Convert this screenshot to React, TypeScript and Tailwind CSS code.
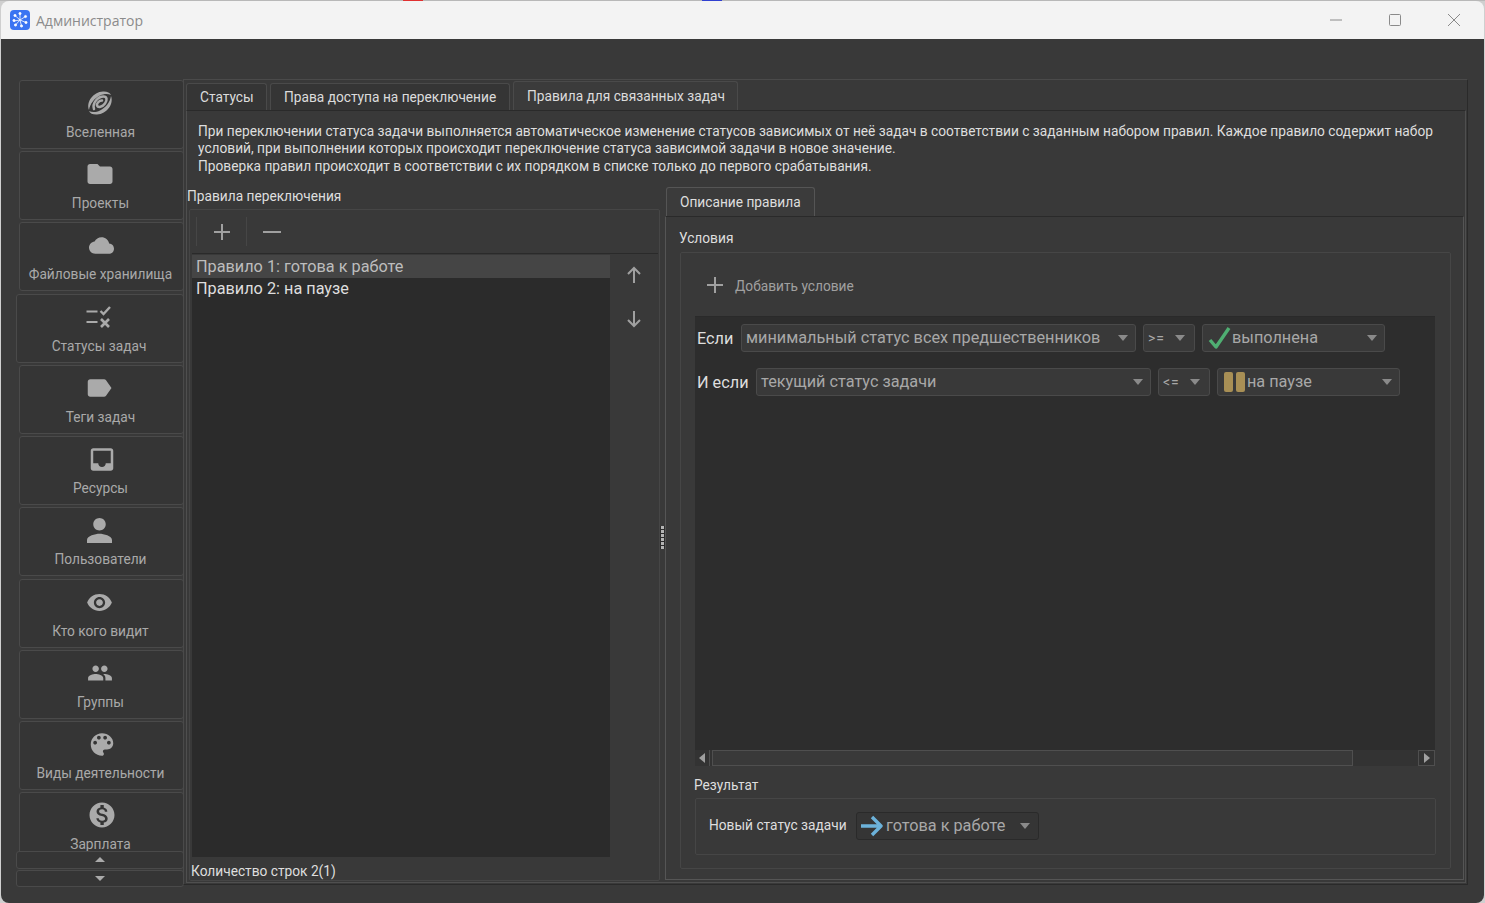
import React from "react";

const P: Record<string, string> = {
  folder: "M10 4H4c-1.1 0-1.99.9-1.99 2L2 18c0 1.1.9 2 2 2h16c1.1 0 2-.9 2-2V8c0-1.1-.9-2-2-2h-8l-2-2z",
  cloud: "M19.35 10.04C18.67 6.59 15.64 4 12 4 9.11 4 6.6 5.64 5.35 8.04 2.34 8.36 0 10.91 0 14c0 3.31 2.69 6 6 6h13c2.76 0 5-2.24 5-5 0-2.64-2.05-4.78-4.65-4.96z",
  label: "M17.63 5.84C17.27 5.33 16.67 5 16 5L5 5.01C3.9 5.01 3 5.9 3 7v10c0 1.1.9 1.99 2 1.99L16 19c.67 0 1.27-.33 1.63-.84L22 12l-4.37-6.16z",
  inbox: "M19 3H4.99c-1.11 0-1.98.89-1.98 2L3 19c0 1.1.88 2 1.99 2H19c1.1 0 2-.9 2-2V5c0-1.11-.9-2-2-2zm0 12h-4c0 1.66-1.35 3-3 3s-3-1.34-3-3H4.99V5H19v10z",
  person: "M12 12c2.21 0 4-1.79 4-4s-1.79-4-4-4-4 1.79-4 4 1.79 4 4 4zm0 2c-2.67 0-8 1.34-8 4v2h16v-2c0-2.66-5.33-4-8-4z",
  eye: "M12 4.5C7 4.5 2.73 7.61 1 12c1.73 4.39 6 7.5 11 7.5s9.27-3.11 11-7.5c-1.73-4.39-6-7.5-11-7.5zM12 17c-2.76 0-5-2.24-5-5s2.24-5 5-5 5 2.24 5 5-2.24 5-5 5zm0-8c-1.66 0-3 1.34-3 3s1.34 3 3 3 3-1.34 3-3-1.34-3-3-3z",
  group: "M16 11c1.66 0 2.99-1.34 2.99-3S17.66 5 16 5c-1.66 0-3 1.34-3 3s1.34 3 3 3zm-8 0c1.66 0 2.99-1.34 2.99-3S9.66 5 8 5C6.34 5 5 6.34 5 8s1.34 3 3 3zm0 2c-2.33 0-7 1.17-7 3.5V19h14v-2.5c0-2.33-4.67-3.5-7-3.5zm8 0c-.29 0-.62.02-.97.05 1.16.84 1.97 1.97 1.97 3.45V19h6v-2.5c0-2.33-4.67-3.5-7-3.5z",
  palette: "M12 3c-4.97 0-9 4.03-9 9s4.03 9 9 9c.83 0 1.5-.67 1.5-1.5 0-.39-.15-.74-.39-1.01-.23-.26-.38-.61-.38-.99 0-.83.67-1.5 1.5-1.5H16c2.76 0 5-2.24 5-5 0-4.42-4.03-8-9-8zm-5.5 9c-.83 0-1.5-.67-1.5-1.5S5.67 9 6.5 9 8 9.67 8 10.5 7.33 12 6.5 12zm3-4C8.67 8 8 7.33 8 6.5S8.67 5 9.5 5s1.5.67 1.5 1.5S10.33 8 9.5 8zm5 0c-.83 0-1.5-.67-1.5-1.5S13.67 5 14.5 5s1.5.67 1.5 1.5S15.33 8 14.5 8zm3 4c-.83 0-1.5-.67-1.5-1.5S16.67 9 17.5 9s1.5.67 1.5 1.5-.67 1.5-1.5 1.5z",
  money: "M12 2C6.48 2 2 6.48 2 12s4.48 10 10 10 10-4.48 10-10S17.52 2 12 2zm1.41 16.09V20h-2.67v-1.93c-1.71-.36-3.16-1.46-3.27-3.4h1.96c.1 1.05.82 1.87 2.65 1.87 1.96 0 2.4-.98 2.4-1.59 0-.83-.44-1.61-2.67-2.14-2.48-.6-4.18-1.62-4.18-3.67 0-1.72 1.39-2.84 3.11-3.21V4h2.67v1.95c1.86.45 2.79 1.86 2.85 3.39H14.3c-.05-1.11-.64-1.87-2.22-1.87-1.5 0-2.4.68-2.4 1.64 0 .84.65 1.39 2.67 1.91s4.18 1.39 4.18 3.91c-.01 1.83-1.38 2.83-3.12 3.16z",
};

function NavIcon({ name, size }: { name: string; size: number }) {
  if (name === "galaxy") {
    return (
      <svg width="30" height="30" viewBox="0 0 30 30" fill="#aaaaaa">
        <path d="M4 22C1 14 8 4 18 3.500 22 3.300 25 4.500 26 7 23 5.500 19 5.500 15 7.500 9 10.500 5 16 4 22z" />
        <path d="M26 8C29 16 22 26 12 26.500 8 26.700 5 25.500 4 23 7 24.500 11 24.500 15 22.500 21 19.500 25 14 26 8z" />
        <path d="M9 21C7 15 13 8.500 18.500 8.500 22 8.500 22.500 12 20 15.500 17.500 19 13 20 12 17.500 11.500 15.500 14 12.500 17 12.500" fill="none" stroke="#aaaaaa" strokeWidth="2.500" strokeLinecap="round" />
      </svg>
    );
  }
  if (name === "status") {
    return (
      <svg width="30" height="30" viewBox="0 0 30 30" fill="none" stroke="#aaaaaa">
        <path d="M2.500 9.500h11M2.500 20h11" strokeWidth="2" />
        <path d="M16.500 9l3 3 6.500-7" strokeWidth="2.400" />
        <path d="M17 17l8 8M25 17l-8 8" strokeWidth="2.600" />
      </svg>
    );
  }
  if (name === "person") {
    return (
      <svg width="25" height="25" viewBox="4 4 16 16" fill="#aaaaaa">
        <path d={P[name]} />
      </svg>
    );
  }
  return (
    <svg width={size} height={size} viewBox="0 0 24 24" fill="#aaaaaa">
      <path d={P[name]} />
    </svg>
  );
}

const NAV = [
  { icon: "galaxy", size: 30, shift: "-translate-x-[1px]", label: "Вселенная", cls: "mb-[2px] ml-[3px] w-[165px]" },
  { icon: "folder", size: 30, shift: "-translate-x-[1px]", label: "Проекты", cls: "mb-[2px] ml-[3px] w-[165px]" },
  { icon: "cloud", size: 25, shift: "translate-x-[1px]", label: "Файловые хранилища", cls: "mb-[3px] ml-[3px] w-[165px]" },
  { icon: "status", size: 30, shift: "", label: "Статусы задач", cls: "mb-[2px] w-[168px]" },
  { icon: "label", size: 30, shift: "-translate-x-[2px]", label: "Теги задач", cls: "mb-[2px] ml-[3px] w-[165px]" },
  { icon: "inbox", size: 33, shift: "translate-x-[1px]", label: "Ресурсы", cls: "mb-[2px] ml-[3px] w-[165px]" },
  { icon: "person", size: 25, shift: "-translate-x-[1px]", label: "Пользователи", cls: "mb-[3px] ml-[3px] w-[165px]" },
  { icon: "eye", size: 27, shift: "-translate-x-[1px]", label: "Кто кого видит", cls: "mb-[2px] ml-[3px] w-[165px]" },
  { icon: "group", size: 26, shift: "-translate-x-[1px]", label: "Группы", cls: "mb-[2px] ml-[3px] w-[165px]" },
  { icon: "palette", size: 33, shift: "translate-x-[1px]", label: "Виды деятельности", cls: "mb-[2px] ml-[3px] w-[165px]" },
  { icon: "money", size: 30, shift: "translate-x-[1px]", label: "Зарплата", cls: "mb-[2px] ml-[3px] w-[165px]" },
];

function Caret() {
  return (
    <svg width="10" height="6" viewBox="0 0 10 6" className="shrink-0">
      <path d="M0 0h10L5 6z" fill="#8a8a8a" />
    </svg>
  );
}

function Combo({ text, cls, icon, small, dark }: { text: string; cls: string; icon?: React.ReactNode; small?: boolean; dark?: boolean }) {
  return (
    <div
      className={`h-[28px] shrink-0 flex items-center rounded-[3px] border text-[#a8a8a8] ${dark ? "border-[#2a2a2a] bg-[#353535]" : "border-[#4a4a4a] bg-[#393939]"} ${cls}`}
    >
      {icon}
      <span className={`flex-1 whitespace-nowrap leading-[26px] ${small ? "text-[14px] tracking-[1px]" : "text-[16.250px]"}`}>{text}</span>
      <Caret />
    </div>
  );
}

function Check() {
  return (
    <svg width="24" height="24" viewBox="0 0 24 24" className="ml-[5px] shrink-0" fill="none">
      <path d="M2 14l6 7L21 2" stroke="#4fae72" strokeWidth="3.400" strokeLinejoin="round" />
    </svg>
  );
}
function Pause() {
  return (
    <span className="ml-[6px] mr-[2px] flex shrink-0 gap-[3px]">
      <span className="h-[20px] w-[9px] rounded-[2px] bg-[#a88f55]" />
      <span className="h-[20px] w-[9px] rounded-[2px] bg-[#a88f55]" />
    </span>
  );
}
function ArrowRight() {
  return (
    <svg width="22" height="22" viewBox="0 0 22 22" className="ml-[4px] mr-[3px] shrink-0" fill="none" stroke="#6cb2da" strokeWidth="3.400" strokeLinejoin="round">
      <path d="M0 11h20M11 2l9 9-9 9" />
    </svg>
  );
}

function Plus({ cls }: { cls?: string }) {
  return (
    <svg width="18" height="18" viewBox="0 0 18 18" className={cls} stroke="#a0a0a0" strokeWidth="2">
      <path d="M9 1v16M1 9h16" />
    </svg>
  );
}

function Tab({ text, w, active }: { text: string; w: string; active?: boolean }) {
  return (
    <div
      className={`flex shrink-0 items-center rounded-t-[3px] border border-b-0 border-[#4a4a4a] pl-[13px] text-[13.720px] text-[#dcdcdc] ${w} ${active ? "-mt-[2px] h-[29px] bg-[#3b3b3b]" : "h-[27px] bg-[#353535]"}`}
    >
      {text}
    </div>
  );
}

export default function App() {
  return (
    <div className="flex h-[903px] w-[1485px] flex-col overflow-hidden bg-[#cfcfcf] font-['Roboto',sans-serif]">
      <div className="flex h-[1px] shrink-0">
        <div className="w-[403px] bg-[#b8b8b8]" />
        <div className="w-[20px] bg-[#e03030]" />
        <div className="w-[279px] bg-[#b8b8b8]" />
        <div className="w-[20px] bg-[#3040d0]" />
        <div className="flex-1 bg-[#b8b8b8]" />
      </div>
      <div className="mx-[1px] flex min-h-0 flex-1 flex-col overflow-hidden rounded-[8px]">
        {/* title bar */}
        <div className="flex h-[38px] shrink-0 items-center bg-[#f3f3f3] pl-[9px]">
          <svg width="20" height="20" viewBox="0 0 20 20">
            <rect width="20" height="20" rx="4" fill="#3a74f2" />
            <g stroke="#fff" strokeWidth=".8" fill="#fff">
              <path d="M10 10L10 4M10 10L15.500 6.500M10 10L16 12.500M10 10L11.500 16M10 10L5.500 15M10 10L4 11M10 10L5 5.500" />
              <circle cx="10" cy="3.500" r="1.100" />
              <circle cx="15.500" cy="6.500" r="1.100" />
              <circle cx="16" cy="12.500" r="1.100" />
              <circle cx="11.500" cy="16" r="1.100" />
              <circle cx="5.500" cy="15" r="1.100" />
              <circle cx="4" cy="10.500" r="1.100" />
              <circle cx="5" cy="5.500" r="1.100" />
            </g>
          </svg>
          <span className="ml-[6px] font-['Open_Sans',sans-serif] text-[14px] text-[#8b8b8b]">Администратор</span>
          <div className="ml-auto flex items-center">
            <svg width="12" height="2" viewBox="0 0 12 2" className="mr-[47px]">
              <path d="M0 1h12" stroke="#8a8a8a" />
            </svg>
            <svg width="12" height="12" viewBox="0 0 12 12" className="mr-[47px]">
              <rect x=".5" y=".5" width="11" height="11" rx="1" fill="none" stroke="#8a8a8a" />
            </svg>
            <svg width="12" height="12" viewBox="0 0 12 12" className="mr-[24px]">
              <path d="M0 0l12 12M12 0L0 12" stroke="#8a8a8a" />
            </svg>
          </div>
        </div>

        {/* body */}
        <div className="flex min-h-0 flex-1 bg-[#393939] pb-[18px] pl-[15px] pr-[16px] pt-[40px]">
          {/* sidebar */}
          <div className="-mb-[2px] mt-[1px] flex w-[168px] shrink-0 flex-col">
            <div className="h-[771px] shrink-0 overflow-hidden">
              {NAV.map((n) => (
                <div
                  key={n.label}
                  className={`flex h-[69px] flex-col items-center rounded-[3px] border border-[#4a4a4a] bg-[#353535] pr-[2px] pt-[7px] ${n.cls}`}
                >
                  <span className={`flex h-[30px] w-[30px] items-center justify-center overflow-visible ${n.shift}`}>
                    <NavIcon name={n.icon} size={n.size} />
                  </span>
                  <span className="mt-[5px] whitespace-nowrap text-[13.720px] leading-[18px] text-[#a9a9a9]">{n.label}</span>
                </div>
              ))}
            </div>
            <div className="flex h-[18px] items-center justify-center rounded-[3px] border border-[#4a4a4a] bg-[#353535]">
              <svg width="10" height="5" viewBox="0 0 10 5">
                <path d="M5 0l5 5H0z" fill="#aaa" />
              </svg>
            </div>
            <div className="mt-[1px] flex h-[18px] items-center justify-center rounded-[3px] border border-[#4a4a4a] bg-[#353535]">
              <svg width="10" height="5" viewBox="0 0 10 5">
                <path d="M0 0h10L5 5z" fill="#aaa" />
              </svg>
            </div>
          </div>

          {/* main */}
          <div className="-ml-[1px] flex min-w-0 flex-1 flex-col border border-b-[#2a2a2a] border-l-[#4a4a4a] border-r-[#2a2a2a] border-t-[#4a4a4a] pt-[3px]">
            <div className="flex shrink-0 gap-[3px] pl-[2px]">
              <Tab text="Статусы" w="w-[81px]" />
              <Tab text="Права доступа на переключение" w="w-[240px]" />
              <Tab text="Правила для связанных задач" w="w-[225px]" active />
            </div>
            <div className="mb-[1px] ml-[2px] mr-[1px] flex min-h-0 flex-1 flex-col border border-[#4f4f4f] border-t-[#2a2a2a]">
              <div className="pl-[11px] pt-[11.500px] text-[13.720px] leading-[17.500px] text-[#dedede]">
                <div className="whitespace-nowrap">
                  При переключении статуса задачи выполняется автоматическое изменение статусов зависимых от неё задач в соответствии с заданным набором правил. Каждое правило содержит набор
                </div>
                <div className="whitespace-nowrap">условий, при выполнении которых происходит переключение статуса зависимой задачи в новое значение.</div>
                <div className="whitespace-nowrap">Проверка правил происходит в соответствии с их порядком в списке только до первого срабатывания.</div>
              </div>

              <div className="mb-[2px] mt-[11.500px] flex min-h-0 flex-1 pr-[1px]">
                {/* left pane */}
                <div className="-mb-[1px] flex w-[473px] shrink-0 flex-col">
                  <div className="h-[18px] text-[13.720px] leading-[18px] text-[#dedede]">Правила переключения</div>
                  <div className="ml-[2px] mt-[4px] flex min-h-0 flex-1 flex-col rounded-[2px] border border-[#464646] pl-[2px] pr-[1px]">
                    <div className="flex h-[44px] shrink-0 items-center border-b border-[#2a2a2a] pl-[4px] pt-[1px]">
                      <div className="flex h-[29px] w-[51px] items-center justify-center border-l border-r border-[#464646]">
                        <Plus />
                      </div>
                      <div className="flex h-[29px] w-[50px] items-center justify-center">
                        <svg width="18" height="2" viewBox="0 0 18 2">
                          <path d="M0 1h18" stroke="#a0a0a0" strokeWidth="2" />
                        </svg>
                      </div>
                    </div>
                    <div className="mt-[1px] flex h-[602px] shrink-0">
                      <div className="w-[418px] shrink-0 bg-[#2b2b2b] text-[16.250px]">
                        <div className="flex h-[23px] items-center bg-[#454545] pl-[4px] pt-[2px] text-[#bdbdbd]">Правило 1: готова к работе</div>
                        <div className="flex h-[22px] items-center pl-[4px] pt-[1px] text-[#dedede]">Правило 2: на паузе</div>
                      </div>
                      <div className="flex flex-1 flex-col items-center gap-[24px] pr-[1px] pt-[10px]">
                        <svg width="20" height="20" viewBox="0 0 20 20" fill="none" stroke="#a0a0a0" strokeWidth="2">
                          <path d="M10 18V3M4 9l6-6 6 6" />
                        </svg>
                        <svg width="20" height="20" viewBox="0 0 20 20" fill="none" stroke="#a0a0a0" strokeWidth="2">
                          <path d="M10 2v15M4 11l6 6 6-6" />
                        </svg>
                      </div>
                    </div>
                    <div className="-ml-[1px] mt-[5px] text-[13.720px] leading-[18px] text-[#dedede]">Количество строк 2(1)</div>
                  </div>
                </div>

                {/* splitter */}
                <div className="-ml-[1px] flex w-[6px] shrink-0 items-center justify-center pt-[8px]">
                  <div className="flex flex-col gap-[1px] bg-[#2c2c2c] px-[1px]">
                    {Array.from({ length: 6 }).map((_, i) => (
                      <span key={i} className="h-[3px] w-[3px] bg-[#b4b4b4]" />
                    ))}
                  </div>
                </div>

                {/* right pane */}
                <div className="flex min-w-0 flex-1 flex-col">
                  <div className="ml-[1px] flex h-[29px] w-[149px] shrink-0 items-center rounded-t-[3px] border border-b-0 border-[#555555] bg-[#3b3b3b] pl-[13px] pt-[1px] text-[13.720px] text-[#dedede]">
                    Описание правила
                  </div>
                  <div className="flex min-h-0 flex-1 flex-col border border-[#555555] border-t-[#2a2a2a]">
                    <div className="pl-[13px] pt-[12px] text-[13.720px] leading-[18px] text-[#dedede]">Условия</div>
                    <div className="mb-[10px] ml-[14px] mr-[12px] mt-[5px] flex min-h-0 flex-1 flex-col rounded-[2px] border border-[#464646] pl-[14px] pr-[15px]">
                      <div className="flex h-[63px] shrink-0 items-center pl-[11px] pt-[2px]">
                        <Plus />
                        <span className="ml-[11px] pt-[2px] text-[13.720px] text-[#a0a0a0]">Добавить условие</span>
                      </div>
                      <div className="flex h-[450px] shrink-0 flex-col border-t border-[#2a2a2a] bg-[#2d2d2d]">
                        <div className="mt-[7px] flex h-[28px] items-center pl-[2px]">
                          <span className="w-[44px] pt-[4px] text-[16.250px] text-[#dedede]">Если</span>
                          <Combo text="минимальный статус всех предшественников" cls="w-[395px] pl-[4px] pr-[7px]" />
                          <Combo text=">=" small cls="ml-[7px] w-[52px] pl-[4px] pr-[9px]" />
                          <Combo text="выполнена" icon={<Check />} cls="ml-[7px] w-[183px] pr-[7px]" />
                        </div>
                        <div className="mt-[16px] flex h-[28px] items-center pl-[2px]">
                          <span className="w-[59px] pt-[4px] text-[16.250px] text-[#dedede]">И если</span>
                          <Combo text="текущий статус задачи" cls="w-[395px] pl-[4px] pr-[7px]" />
                          <Combo text="<=" small cls="ml-[7px] w-[52px] pl-[4px] pr-[9px]" />
                          <Combo text="на паузе" icon={<Pause />} cls="ml-[7px] w-[183px] pr-[7px]" />
                        </div>
                        <div className="flex-1" />
                        <div className="flex h-[16px] shrink-0 bg-[#333333]">
                          <div className="flex w-[15px] shrink-0 items-center justify-center border-r border-[#4f4f4f]">
                            <svg width="6" height="10" viewBox="0 0 6 10">
                              <path d="M6 0v10L0 5z" fill="#a0a0a0" />
                            </svg>
                          </div>
                          <div className="ml-[2px] w-[641px] shrink-0 border border-[#4f4f4f] bg-[#393939]" />
                          <div className="flex-1" />
                          <div className="flex w-[17px] shrink-0 items-center justify-center border border-[#4f4f4f]">
                            <svg width="6" height="10" viewBox="0 0 6 10">
                              <path d="M0 0v10l6-5z" fill="#a0a0a0" />
                            </svg>
                          </div>
                        </div>
                      </div>
                      <div className="-ml-[1px] mt-[10px] h-[18px] shrink-0 text-[13.720px] leading-[18px] text-[#dedede]">Результат</div>
                      <div className="-mr-[1px] mb-[15px] mt-[4px] flex h-[57px] shrink-0 items-center rounded-[2px] border border-[#464646] pl-[13px]">
                        <span className="w-[147px] shrink-0 pb-[1px] text-[13.720px] text-[#dedede]">Новый статус задачи</span>
                        <Combo text="готова к работе" dark icon={<ArrowRight />} cls="w-[183px] pr-[8px]" />
                      </div>
                    </div>
                  </div>
                </div>
              </div>
            </div>
          </div>
        </div>
      </div>
    </div>
  );
}
